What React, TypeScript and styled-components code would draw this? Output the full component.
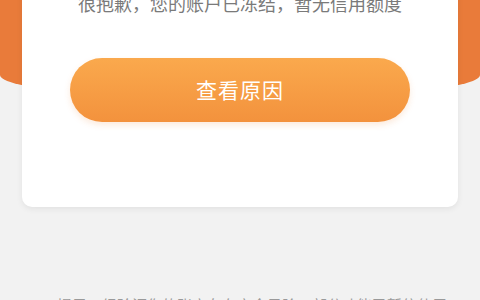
import styled, { createGlobalStyle } from "styled-components";

const GlobalStyle = createGlobalStyle`
  html, body {
    margin: 0;
    padding: 0;
    background: #f2f2f2;
    overflow: hidden;
  }
  body {
    font-family: "Noto Sans CJK SC", "Noto Sans", sans-serif;
  }
`;

const App = () => {
  return (
    <>
      <GlobalStyle />
      <Page>
        <Header />
        <Card>
          <Message>很抱歉，您的账户已冻结，暂无信用额度</Message>
          <ReasonButton type="button">查看原因</ReasonButton>
        </Card>
        <Tip>提示：经验证您的账户存在安全风险，部分功能已暂停使用</Tip>
      </Page>
    </>
  );
};

const Page = styled.div`
  width: 480px;
  height: 440px;
  margin-top: -140px;
  display: flex;
  flex-direction: column;
`;

const Header = styled.div`
  height: 239px;
  flex-shrink: 0;
  background: #e97b3a;
  border-radius: 0 0 50% 50% / 0 0 24px 24px;
`;

const Card = styled.div`
  margin: -159px 22px 0 22px;
  padding: 51px 48px 85px 48px;
  background: #fff;
  border-radius: 10px;
  box-shadow: 0 2px 6px rgba(0, 0, 0, 0.07);
  display: flex;
  flex-direction: column;
  align-items: center;
`;

const Message = styled.div`
  font-size: 18px;
  line-height: 24px;
  color: #7a7a7a;
  white-space: nowrap;
`;

const ReasonButton = styled.button`
  margin-top: 43px;
  width: 100%;
  height: 64px;
  border: none;
  border-radius: 32px;
  background: linear-gradient(180deg, #faa94d 0%, #f3923d 100%);
  box-shadow: 0 3px 6px rgba(240, 140, 60, 0.18);
  color: #fff;
  font-family: inherit;
  font-size: 21px;
  letter-spacing: 1px;
  padding: 0 0 2px 0;
`;

const Tip = styled.div`
  margin-top: 87px;
  padding: 0 57px;
  font-size: 15px;
  line-height: 22px;
  color: #9a9a9a;
  white-space: nowrap;
`;

export default App;
